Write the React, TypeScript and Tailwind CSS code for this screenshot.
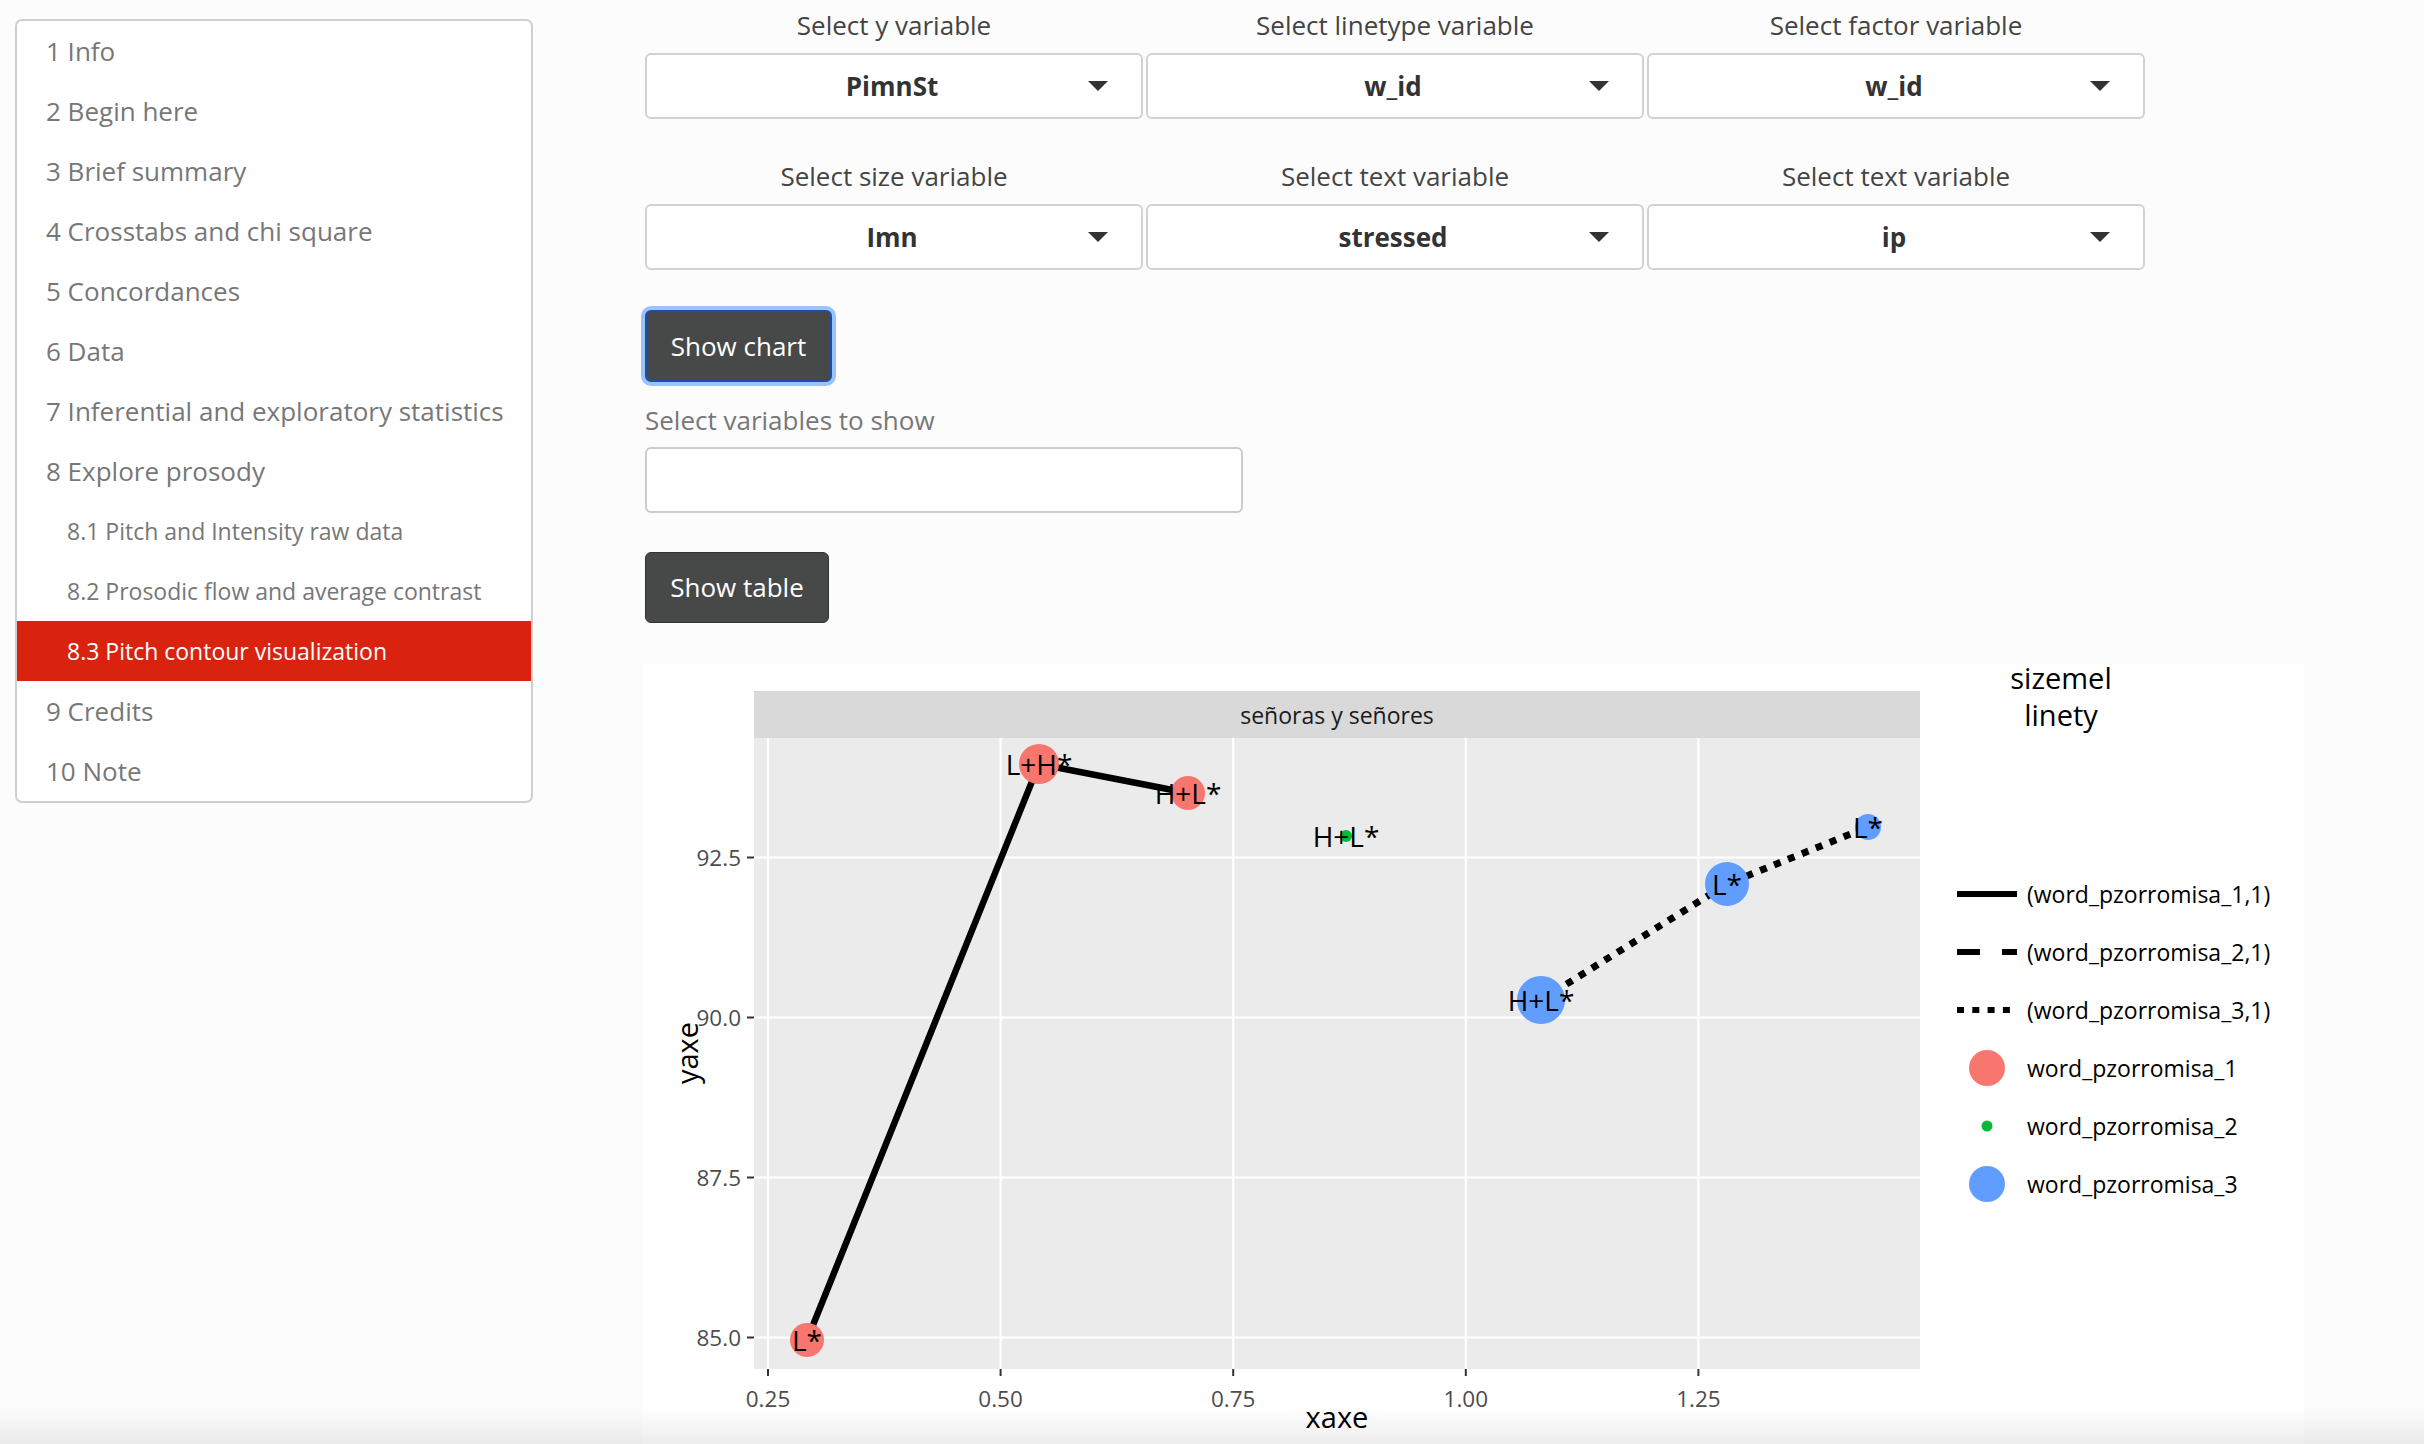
import React from "react";

type TocItem = { label: string; sub?: boolean; active?: boolean };

const toc: TocItem[] = [
    { label: "1 Info" },
    { label: "2 Begin here" },
    { label: "3 Brief summary" },
    { label: "4 Crosstabs and chi square" },
    { label: "5 Concordances" },
    { label: "6 Data" },
    { label: "7 Inferential and exploratory statistics" },
    { label: "8 Explore prosody" },
    { label: "8.1 Pitch and Intensity raw data", sub: true },
    { label: "8.2 Prosodic flow and average contrast", sub: true },
    { label: "8.3 Pitch contour visualization", sub: true, active: true },
    { label: "9 Credits" },
    { label: "10 Note" },
];

const SelectBox = ({ label, value }: { label: string; value: string }) => (
    <div className="flex flex-col">
        <div className="h-[34px] text-center text-[26px] leading-[34px] text-[#444]">{label}</div>
        <div className="relative mt-[11px] flex h-[66px] items-center justify-center rounded-[6px] border-2 border-[#d2d2d2] bg-white">
            <span className="pr-[4px] text-[26px] font-bold text-[#333]">{value}</span>
            <svg className="absolute right-[33px] top-[26px]" width="20" height="10" viewBox="0 0 20 10">
                <polygon points="0,0 20,0 10,10" fill="#333" />
            </svg>
        </div>
    </div>
);

// x / y scales of the ggplot panel, in page pixels
const sx = (v: number) => 768 + (v - 0.25) * 930.4;
const sy = (v: number) => 1337.5 - (v - 85) * 64;

const points = [
    { x: 807, y: 1340, r: 17, c: "#F8766D", t: "L*" },
    { x: 1039, y: 764, r: 20, c: "#F8766D", t: "L+H*" },
    { x: 1188, y: 793, r: 17, c: "#F8766D", t: "H+L*" },
    { x: 1346, y: 836, r: 6, c: "#00BA38", t: "H+L*" },
    { x: 1541, y: 1000, r: 24, c: "#619CFF", t: "H+L*" },
    { x: 1727, y: 884, r: 22, c: "#619CFF", t: "L*" },
    { x: 1868, y: 827, r: 13, c: "#619CFF", t: "L*" },
];

const PitchChart = () => {
    const xt = [0.25, 0.5, 0.75, 1.0, 1.25];
    const yt = [85, 87.5, 90, 92.5];
    const font = "Open Sans, sans-serif";
    return (
        <svg
            width="1661"
            height="800"
            viewBox="643 664 1661 800"
            style={{ fontFamily: font, overflow: "visible" }}
        >
            {/* strip */}
            <rect x="754" y="691" width="1166" height="47" fill="#d9d9d9" />
            <text x="1337" y="715" fontSize="23" fill="#1a1a1a" textAnchor="middle" dominantBaseline="central">
                señoras y señores
            </text>
            {/* panel */}
            <rect x="754" y="738" width="1166" height="631" fill="#ebebeb" />
            {xt.map((v) => (
                <line key={"gx" + v} x1={sx(v)} x2={sx(v)} y1="738" y2="1369" stroke="#fff" strokeWidth="2.2" />
            ))}
            {yt.map((v) => (
                <line key={"gy" + v} x1="754" x2="1920" y1={sy(v)} y2={sy(v)} stroke="#fff" strokeWidth="2.2" />
            ))}
            {/* axes */}
            {yt.map((v) => (
                <g key={"ty" + v}>
                    <line x1="747" x2="754" y1={sy(v)} y2={sy(v)} stroke="#333" strokeWidth="2" />
                    <text x="741" y={sy(v)} fontSize="22.5" fill="#4d4d4d" textAnchor="end" dominantBaseline="central">
                        {v.toFixed(1)}
                    </text>
                </g>
            ))}
            {xt.map((v) => (
                <g key={"tx" + v}>
                    <line x1={sx(v)} x2={sx(v)} y1="1369" y2="1376" stroke="#333" strokeWidth="2" />
                    <text x={sx(v)} y="1398" fontSize="22.5" fill="#4d4d4d" textAnchor="middle" dominantBaseline="central">
                        {v.toFixed(2)}
                    </text>
                </g>
            ))}
            <text x="1337" y="1416" fontSize="29" fill="#000" textAnchor="middle" dominantBaseline="central">
                xaxe
            </text>
            <text
                x="686"
                y="1053"
                fontSize="29"
                fill="#000"
                textAnchor="middle"
                dominantBaseline="central"
                transform="rotate(-90 686 1053)"
            >
                yaxe
            </text>

            {/* contours */}
            <polyline points="807,1340 1039,764 1188,793" fill="none" stroke="#000" strokeWidth="6.5" />
            <polyline
                points="1541,1000 1727,884 1868,827"
                fill="none"
                stroke="#000"
                strokeWidth="7"
                strokeDasharray="7 8"
            />
            {points.map((p, i) => (
                <circle key={"p" + i} cx={p.x} cy={p.y} r={p.r} fill={p.c} />
            ))}
            {points.map((p, i) => (
                <text key={"l" + i} x={p.x} y={p.y} fontSize="28" fill="#000" textAnchor="middle" dominantBaseline="central">
                    {p.t}
                </text>
            ))}

            {/* legend */}
            <text x="2061" y="677" fontSize="29" fill="#000" textAnchor="middle" dominantBaseline="central">
                sizemel
            </text>
            <text x="2061" y="714" fontSize="29" fill="#000" textAnchor="middle" dominantBaseline="central">
                linety
            </text>
            <line x1="1957" x2="2017" y1="894" y2="894" stroke="#000" strokeWidth="6" />
            <line x1="1957" x2="2017" y1="952" y2="952" stroke="#000" strokeWidth="6" strokeDasharray="23 22" />
            <line x1="1957" x2="2017" y1="1010" y2="1010" stroke="#000" strokeWidth="6" strokeDasharray="7 8.3" />
            <circle cx="1987" cy="1068" r="18" fill="#F8766D" />
            <circle cx="1987" cy="1126" r="5.5" fill="#00BA38" />
            <circle cx="1987" cy="1184" r="18" fill="#619CFF" />
            {[
                ["(word_pzorromisa_1,1)", 894],
                ["(word_pzorromisa_2,1)", 952],
                ["(word_pzorromisa_3,1)", 1010],
                ["word_pzorromisa_1", 1068],
                ["word_pzorromisa_2", 1126],
                ["word_pzorromisa_3", 1184],
            ].map(([t, y]) => (
                <text key={t as string} x="2027" y={y as number} fontSize="23" fill="#000" dominantBaseline="central">
                    {t}
                </text>
            ))}
        </svg>
    );
};

const App = () => {
    return (
        <div className="min-h-screen w-full bg-[#fcfcfc] font-['Open_Sans',sans-serif]">
            <div className="flex items-start">
                {/* Table of contents */}
                <nav className="ml-[15px] mt-[19px] w-[518px] shrink-0 overflow-hidden rounded-[7px] border-2 border-[#cfcfcf] bg-white">
                    {toc.map((item) => (
                        <div
                            key={item.label}
                            className={`flex h-[60px] items-center ${item.sub ? "pl-[50px] text-[23px]" : "pl-[29px] text-[26px]"} ${
                                item.active ? "bg-[#d9230f] text-white" : "text-[#777]"
                            }`}
                        >
                            {item.label}
                        </div>
                    ))}
                </nav>

                {/* Controls and chart */}
                <main className="ml-[112px] flex flex-col pt-[8px]">
                    <div className="grid grid-cols-[498px_498px_498px] gap-x-[3px]">
                        <SelectBox label="Select y variable" value="PimnSt" />
                        <SelectBox label="Select linetype variable" value="w_id" />
                        <SelectBox label="Select factor variable" value="w_id" />
                    </div>
                    <div className="mt-[40px] grid grid-cols-[498px_498px_498px] gap-x-[3px]">
                        <SelectBox label="Select size variable" value="Imn" />
                        <SelectBox label="Select text variable" value="stressed" />
                        <SelectBox label="Select text variable" value="ip" />
                    </div>

                    <button className="mt-[40px] h-[72px] w-[187px] rounded-[6px] border-2 border-[#1c4ea6] bg-[#474949] text-[26px] text-white ring-4 ring-[#9cc2fa]">
                        Show chart
                    </button>

                    <div className="mt-[21px] h-[34px] text-[26px] leading-[34px] text-[#777]">Select variables to show</div>
                    <div className="mt-[10px] h-[66px] w-[598px] rounded-[6px] border-2 border-[#cccccc] bg-white" />

                    <button className="mt-[39px] h-[71px] w-[184px] rounded-[6px] border border-[#333] bg-[#474949] text-[26px] text-white">
                        Show table
                    </button>

                    <div className="-ml-[2px] mt-[41px] w-[1661px] bg-white">
                        <PitchChart />
                    </div>
                </main>
            </div>

            {/* bottom fade of the viewport */}
            <div className="pointer-events-none fixed bottom-0 left-0 h-[36px] w-full bg-gradient-to-b from-transparent to-black/[0.07]" />
        </div>
    );
};

export default App;
